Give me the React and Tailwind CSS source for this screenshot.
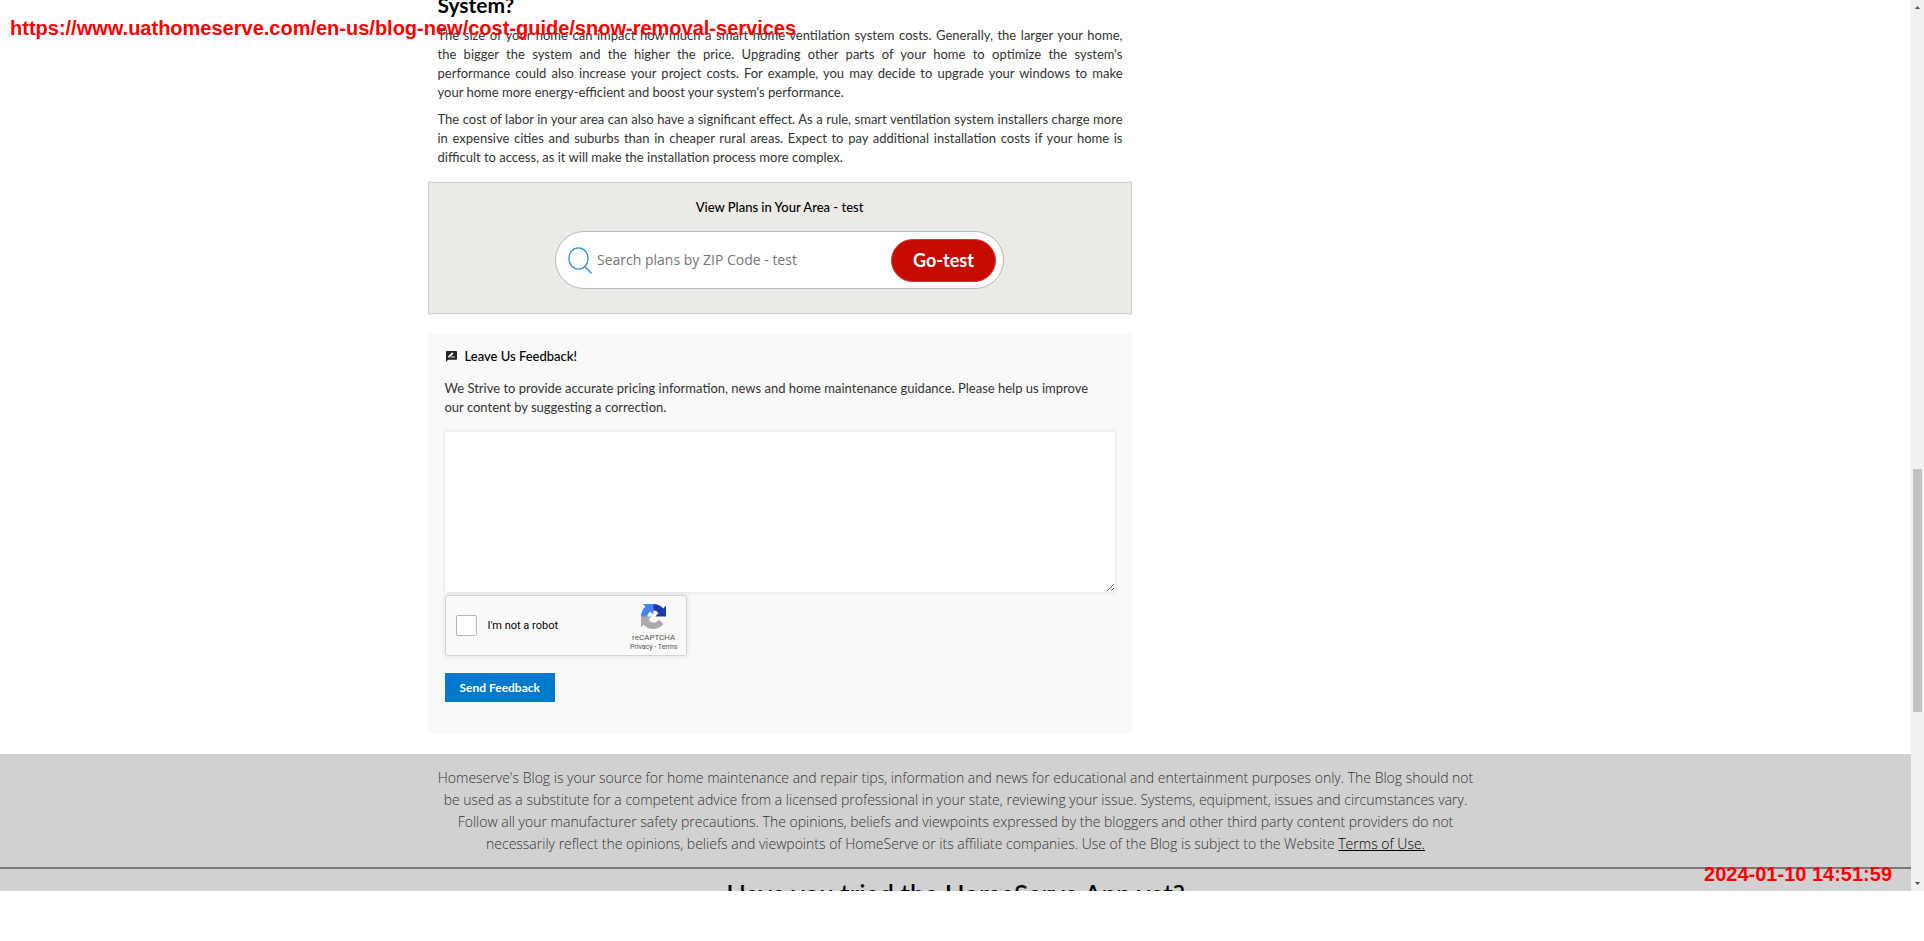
import React from 'react';

function SearchIcon() {
  return (
    <svg viewBox="0 0 26 28" className="h-7 w-[26px] shrink-0" fill="none" stroke="#2f93cf" strokeWidth="1.3" aria-hidden="true">
      <ellipse cx="10.500" cy="12.500" rx="9.6" ry="10.6" />
      <path d="M17 20.700 23.500 27.500" />
    </svg>
  );
}

function ReviewIcon() {
  return (
    <svg viewBox="2 2 20 20" className="ml-px h-[11px] w-[11px] shrink-0" fill="#212529" aria-hidden="true">
      <path d="M20 2H4c-1.1 0-2 .9-2 2v18l4-4h14c1.1 0 2-.9 2-2V4c0-1.1-.9-2-2-2zM6 14v-2.500l6.900-6.900c.2-.2.5-.2.7 0l1.800 1.800c.2.2.2.5 0 .7L8.500 14H6zm12 0h-7.500l2-2H18v2z" />
    </svg>
  );
}

function RecaptchaLogo() {
  return (
    <svg viewBox="0 0 64 64" className="h-[25px] w-[25px]" aria-hidden="true">
      <path fill="#1c3aa9" d="M64 31.950a33 33 0 0 0-.030-1.370V4.580l-7.190 7.190A31.950 31.950 0 0 0 32.040.04c-10.400 0-19.640 4.970-25.470 12.660l11.780 11.910a15.600 15.600 0 0 1 4.770-5.350c2.060-1.610 4.980-2.920 8.920-2.920.48 0 .85.050 1.120.16 4.880.38 9.120 3.080 11.610 6.990l-8.340 8.340L64 31.950" />
      <path fill="#4285f4" d="M31.860.040a33 33 0 0 0-1.370.03H4.580l7.190 7.190A31.950 31.950 0 0 0 .04 32c0 10.400 4.970 19.640 12.660 25.470l11.910-11.780a15.600 15.600 0 0 1-5.350-4.770c-1.610-2.060-2.920-4.980-2.920-8.920 0-.48.050-.85.16-1.120.38-4.880 3.080-9.120 6.990-11.610l8.340 8.340L31.860.040" />
      <path fill="#ababab" d="M.040 32.030c0 .46.010.92.030 1.370V59.400l7.190-7.190A31.950 31.950 0 0 0 32 63.940c10.400 0 19.640-4.970 25.470-12.660L45.690 39.370a15.600 15.600 0 0 1-4.770 5.350c-2.060 1.610-4.980 2.920-8.920 2.920-.48 0-.85-.050-1.120-.16-4.880-.38-9.120-3.080-11.610-6.990l8.340-8.340L.040 32.030" />
    </svg>
  );
}

function Article() {
  return (
    <article className="pr-[9px] pl-[10px] text-justify text-[13px] leading-[19px] text-[#333]">
      <h2 className="-mt-2 mb-2 text-left text-[21px] font-bold leading-[26px] text-black">System?</h2>
      <p className="mb-2">
        The size of your home can impact how much a smart home ventilation system costs. Generally, the larger your home,
        the&nbsp;bigger the system and the higher the price. Upgrading other parts of your home to optimize the system's
        performance&nbsp;could also increase your project costs. For example, you may decide to upgrade your windows to
        make your&nbsp;home&nbsp;more energy-efficient and boost your system's performance.
      </p>
      <p>
        The cost of labor in your area can also have a significant effect. As a rule, smart ventilation system installers
        charge more in expensive cities and suburbs than in cheaper rural areas. Expect to pay additional installation
        costs if your home is difficult to access, as it will make the installation process more complex.
      </p>
    </article>
  );
}

function PlanSearch() {
  return (
    <form className="flex flex-col items-center gap-3 border border-[#ccc] bg-[#ebeae6] pt-3 pb-6" onSubmit={(e) => e.preventDefault()}>
      <label htmlFor="zip" className="text-[13px] font-medium leading-6 text-black">
        View Plans in Your Area - test
      </label>
      <div className="flex h-[58px] w-[449px] items-center gap-[3px] rounded-full border border-[#b9b9b9] bg-white pr-[7px] pl-3">
        <SearchIcon />
        <input
          id="zip"
          type="text"
          placeholder="Search plans by ZIP Code - test"
          className="min-w-0 flex-1 font-['Open_Sans',sans-serif] text-sm text-[#333] outline-none placeholder:text-[#757575]"
        />
        <button type="submit" className="h-[43px] w-[105px] rounded-full border border-[#dc3545] bg-[#c60c00] text-lg font-bold text-white">
          Go-test
        </button>
      </div>
    </form>
  );
}

function Recaptcha() {
  return (
    <div className="flex h-[61px] w-[242px] items-center rounded-[3px] border border-[#d3d3d3] bg-[#f9f9f9] pr-2 pl-[10px] font-[Roboto,sans-serif] shadow-[0_0_4px_1px_rgba(0,0,0,0.08)]">
      <input id="robot" type="checkbox" className="h-[21px] w-[21px] appearance-none rounded-[2px] border border-[#b5b5b5] bg-white" />
      <label htmlFor="robot" className="ml-[11px] flex-1 text-[11px] leading-4 text-black">
        I'm not a robot
      </label>
      <div className="flex flex-col items-center pt-1 text-[#555]">
        <RecaptchaLogo />
        <span className="mt-[3px] text-[8px] leading-[11px]">reCAPTCHA</span>
        <span className="text-[7px] leading-[8px]">
          <a href="#privacy">Privacy</a> - <a href="#terms">Terms</a>
        </span>
      </div>
    </div>
  );
}

function Feedback() {
  return (
    <form className="rounded-[2px] bg-[#f9f9f9] px-[17px] pt-[11px] pb-8 text-[13px] leading-[19px] text-[#333]" onSubmit={(e) => e.preventDefault()}>
      <h3 className="mb-[11px] flex items-center gap-2 font-medium leading-6 text-black">
        <ReviewIcon />
        Leave Us Feedback!
      </h3>
      <label htmlFor="feedback" className="mb-[15px] block">
        We Strive to provide accurate pricing information, news and home maintenance guidance. Please help us improve
        our&nbsp;content by suggesting a correction.
      </label>
      <textarea id="feedback" className="mb-[3px] block h-[160px] w-full resize rounded-[3px] bg-white p-2 shadow-[0_0_4px_rgba(0,0,0,0.12)] outline-none" />
      <Recaptcha />
      <button type="submit" className="mt-[17px] h-[29px] border border-[#0d6efd] bg-[#007ac9] px-[14px] text-xs font-bold text-white">
        Send Feedback
      </button>
    </form>
  );
}

function Disclaimer() {
  return (
    <footer className="mt-5 bg-[#d1d1d1] pt-[13px] text-center">
      <p className="mx-auto max-w-[1056px] px-2 font-['Open_Sans',sans-serif] text-sm font-light leading-[22px] text-[#333]">
        Homeserve's Blog is your source for home maintenance and repair tips, information and news for educational and
        entertainment purposes only. The Blog should not be used as a substitute for a competent advice from a licensed
        professional in your state, reviewing your issue. Systems, equipment, issues and circumstances vary. Follow all
        your manufacturer safety precautions. The opinions, beliefs and viewpoints expressed by the bloggers and other
        third party content providers do not necessarily reflect the opinions, beliefs and viewpoints of HomeServe or its
        affiliate companies. Use of the Blog is subject to the Website{' '}
        <a href="#terms-of-use" className="text-black underline">
          Terms of Use.
        </a>
      </p>
      <hr className="mt-3 border-0 border-t-2 border-[#757875]" />
      <h2 className="pt-[7px] pb-2 text-[26px] font-medium leading-9 text-black">Have you tried the HomeServe App yet?</h2>
    </footer>
  );
}

function Scrollbar() {
  return (
    <div className="flex w-[13px] shrink-0 flex-col items-center bg-[#f1f1f1] py-[6px]" aria-hidden="true">
      <svg viewBox="0 0 5 3" className="h-[3px] w-[5px]" fill="#505050">
        <path d="M0 3 2.500 0 5 3z" />
      </svg>
      <div className="mt-[460px] mb-auto h-[243px] w-[9px] bg-[#c1c1c1]" />
      <svg viewBox="0 0 5 3" className="h-[3px] w-[5px]" fill="#505050">
        <path d="M0 0h5L2.500 3z" />
      </svg>
    </div>
  );
}

export default function App() {
  return (
    <div className="h-screen overflow-hidden bg-white pb-[50px] font-[Lato,sans-serif]">
      <div className="relative flex h-full overflow-hidden">
        <main className="min-w-0 flex-1 overflow-hidden">
          <div className="mx-auto grid max-w-[1056px] grid-cols-3">
            <div className="col-span-2 flex flex-col">
              <Article />
              <div className="mt-[15px] mb-[19px]">
                <PlanSearch />
              </div>
              <Feedback />
            </div>
          </div>
          <Disclaimer />
        </main>
        <Scrollbar />
        <span className="absolute top-4 left-[10px] font-['Liberation_Sans',sans-serif] text-xl font-bold leading-6 text-[#f00]">
          https://www.uathomeserve.com/en-us/blog-new/cost-guide/snow-removal-services
        </span>
        <span className="absolute right-8 bottom-[5px] font-['Liberation_Sans',sans-serif] text-xl font-bold leading-6 text-[#f00]">
          2024-01-10 14:51:59
        </span>
      </div>
    </div>
  );
}
